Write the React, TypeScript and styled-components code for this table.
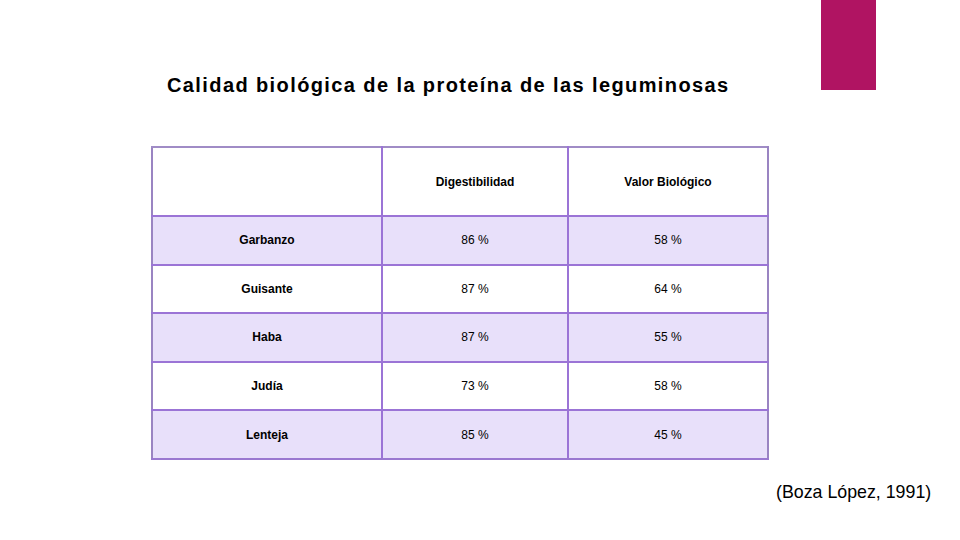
import React from "react";
import styled, { createGlobalStyle } from "styled-components";

const GlobalStyle = createGlobalStyle`
  html, body {
    margin: 0;
    padding: 0;
    background: #fff;
  }
  body {
    font-family: "Liberation Sans", Arial, sans-serif;
    color: #000;
  }
`;

const Slide = styled.div`
  width: 960px;
  height: 540px;
  display: flex;
  flex-direction: column;
  overflow: hidden;
`;

const Header = styled.header`
  display: flex;
  align-items: flex-start;
  height: 90px;
`;

const Title = styled.h1`
  margin: 73px 0 0 167px;
  font-size: 20px;
  font-weight: bold;
  letter-spacing: 1.4px;
  line-height: 24px;
  white-space: nowrap;
`;

const Accent = styled.div`
  width: 55px;
  height: 90px;
  margin: 0 84px 0 auto;
  background: #b01462;
`;

const Table = styled.table`
  margin: 56px 0 0 151px;
  border-collapse: collapse;
  table-layout: fixed;
  width: 616px;
`;

const Cell = styled.td<{ $strong?: boolean }>`
  border: 2px solid #9b74d6;
  height: 46.6px;
  padding: 0;
  text-align: center;
  vertical-align: middle;
  font-size: 12px;
  font-weight: ${(p) => (p.$strong ? "bold" : "normal")};

  tr:first-child > & {
    border-top-color: #a08cc6;
  }
  tr:last-child > & {
    border-bottom-color: #9a78d0;
  }
  &:first-child {
    border-left-color: #9a84c2;
  }
  &:last-child {
    border-right-color: #9a84c2;
  }
`;

const HeadRow = styled.tr`
  & > td {
    height: 67px;
    background: #fff;
  }
`;

const Row = styled.tr<{ $shaded: boolean }>`
  background: ${(p) => (p.$shaded ? "#e8e0fa" : "#fff")};
`;

const Source = styled.p`
  margin: 22px 0 0 776px;
  font-size: 17.8px;
  white-space: nowrap;
`;

const data = [
  { name: "Garbanzo", dig: "86 %", vb: "58 %" },
  { name: "Guisante", dig: "87 %", vb: "64 %" },
  { name: "Haba", dig: "87 %", vb: "55 %" },
  { name: "Judía", dig: "73 %", vb: "58 %" },
  { name: "Lenteja", dig: "85 %", vb: "45 %" },
];

export default function App() {
  return (
    <Slide>
      <GlobalStyle />
      <Header>
        <Title>Calidad biológica de la proteína de las leguminosas</Title>
        <Accent />
      </Header>
      <Table>
        <colgroup>
          <col style={{ width: 230 }} />
          <col style={{ width: 186 }} />
          <col style={{ width: 200 }} />
        </colgroup>
        <tbody>
          <HeadRow>
            <Cell />
            <Cell $strong>Digestibilidad</Cell>
            <Cell $strong>Valor Biológico</Cell>
          </HeadRow>
          {data.map((r, i) => (
            <Row key={r.name} $shaded={i % 2 === 0}>
              <Cell $strong>{r.name}</Cell>
              <Cell>{r.dig}</Cell>
              <Cell>{r.vb}</Cell>
            </Row>
          ))}
        </tbody>
      </Table>
      <Source>(Boza López, 1991)</Source>
    </Slide>
  );
}
